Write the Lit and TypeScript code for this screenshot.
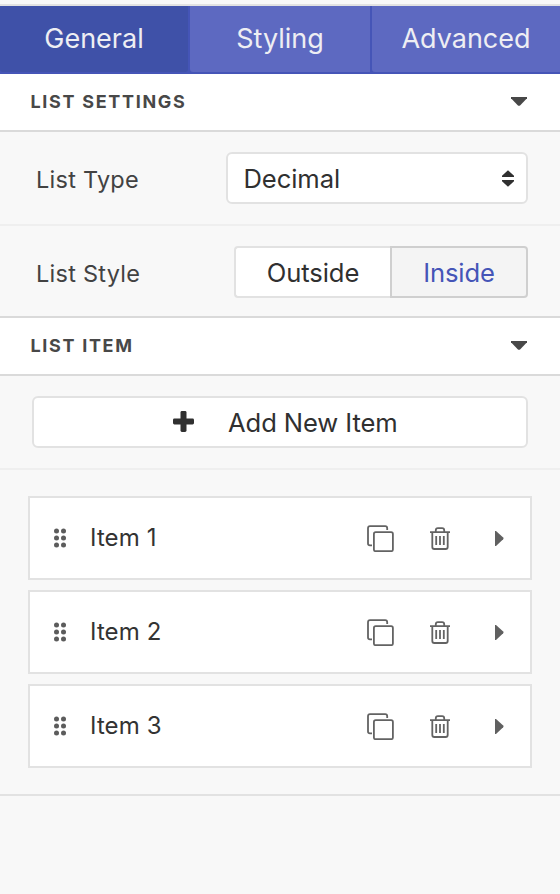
import { LitElement, html, css, svg } from "lit";
import { customElement, property, state } from "lit/decorators.js";
import { classMap } from "lit/directives/class-map.js";

@customElement("section-header")
class SectionHeader extends LitElement {
  @property() label = "";

  static styles = css`
    :host {
      box-sizing: border-box;
      display: flex;
      align-items: center;
      justify-content: space-between;
      height: 58px;
      padding: 0 33px 0 30.5px;
      background: #fff;
      border-bottom: 2px solid #dadada;
      color: #484848;
    }
    .label {
      font-size: 18px;
      font-weight: 650;
      letter-spacing: 1.68px;
      line-height: 24px;
    }
    svg {
      display: block;
    }
  `;

  render() {
    return html`<span class="label">${this.label}</span>
      <svg width="16" height="10" viewBox="0 0 16 10">
        <path d="M0 0H16V1.2L9.3 8.3Q8 9.4 6.7 8.3L0 1.2Z" fill="#484848" />
      </svg>`;
  }
}

@customElement("list-item-card")
class ListItemCard extends LitElement {
  @property() label = "";

  static styles = css`
    :host {
      box-sizing: border-box;
      display: flex;
      align-items: center;
      height: 84px;
      padding: 0 26px 0 24px;
      background: #fff;
      border: 2px solid #e2e2e2;
    }
    svg {
      display: block;
      flex: none;
    }
    .label {
      flex: 1;
      margin-left: 24px;
      font-size: 24px;
      line-height: 30px;
      letter-spacing: 0.1px;
      color: #333;
    }
    .copy {
      margin-right: 36px;
    }
    .trash {
      margin-right: 45px;
    }
  `;

  render() {
    const dots = [0, 1, 2].flatMap((row) =>
      [0, 1].map((col) => svg`<circle cx=${2.5 + col * 7} cy=${2.9 + row * 7.1} r="2.5" fill="#5c5c5c"/>`)
    );
    return html`
      <svg width="12" height="20" viewBox="0 0 12 20">${dots}</svg>
      <span class="label">${this.label}</span>
      <svg class="copy" width="27" height="28" viewBox="0 0 27 28" fill="none" stroke="#636363" stroke-width="1.8">
        <path d="M5 21.4H3Q1 21.4 1 19.4V4.2Q1 2.2 3 2.2H18.2Q20.2 2.2 20.2 4.2V6" />
        <rect x="6.9" y="8.2" width="19" height="19" rx="1.8" />
      </svg>
      <svg class="trash" width="20" height="24" viewBox="0 0 20 24" fill="none" stroke="#636363" stroke-width="1.8">
        <path d="M0 6.2H20M5.8 6V4.2Q5.8 2.1 7.9 2.1H12.1Q14.2 2.1 14.2 4.2V6M2.3 6.2V21Q2.3 23 4.3 23H15.7Q17.7 23 17.7 21V6.2M6.2 10V19M10 10V19M13.8 10V19" />
      </svg>
      <svg width="9" height="16" viewBox="0 0 9 16">
        <path d="M0 1H1L8.2 7.5Q9 8.4 8.2 9.3L1 16H0Z" fill="#606060" />
      </svg>
    `;
  }
}

@customElement("app-root")
class AppRoot extends LitElement {
  @state() tab = "General";
  @state() listStyle = "Inside";
  @state() items = ["Item 1", "Item 2", "Item 3"];

  static styles = css`
    :host {
      box-sizing: border-box;
      display: block;
      height: 894px;
      padding-top: 4px;
      overflow: hidden;
      background: #f8f8f8;
      font-family: Inter, "Liberation Sans", sans-serif;
    }
    .tabs {
      display: grid;
      grid-template-columns: 190px 182px 188px;
      height: 66px;
      border-top: 2px solid #e2e2e2;
      border-bottom: 2px solid #4555b7;
      background: #4555b7;
    }
    .tab {
      box-sizing: border-box;
      display: flex;
      justify-content: center;
      margin-right: 2px;
      padding-top: 16px;
      border-radius: 0 0 0 3px;
      background: #5d69c1;
      color: #eeeef3;
      font-size: 27px;
      line-height: 34px;
      font-weight: 380;
      letter-spacing: 0;
      cursor: pointer;
    }
    .tab:last-child {
      margin-right: 0;
    }
    .tab.active {
      border-radius: 0 0 3px 3px;
      background: #3f51a8;
    }
    .row {
      box-sizing: border-box;
      display: flex;
      align-items: center;
      justify-content: space-between;
      padding: 0 32px 0 36px;
    }
    .type {
      height: 94px;
      border-bottom: 2px solid #efefef;
    }
    .style {
      height: 92px;
      padding-top: 2px;
      border-bottom: 2px solid #dadada;
    }
    .name {
      padding-top: 3px;
      color: #424242;
      font-size: 23.5px;
      line-height: 30px;
      letter-spacing: 0.25px;
    }
    .control {
      box-sizing: border-box;
      height: 52px;
      border: 2px solid #e2e2e2;
      border-radius: 6px;
      background: #fff;
      color: #303030;
      font-size: 25.6px;
      letter-spacing: -0.1px;
      line-height: 32px;
    }
    .select {
      display: flex;
      align-items: center;
      justify-content: space-between;
      width: 302px;
      padding: 2px 12px 0 15.5px;
    }
    .select svg {
      display: block;
      margin-top: -2px;
    }
    .segments {
      display: flex;
    }
    .segment {
      display: flex;
      align-items: center;
      justify-content: center;
      padding-top: 2px;
      cursor: pointer;
    }
    .segment:first-child {
      width: 156px;
      border-right: 0;
      border-radius: 4px 0 0 4px;
    }
    .segment:last-child {
      width: 138px;
      border-radius: 0 4px 4px 0;
    }
    .segment.active {
      border-color: #cfcfcf;
      background: #f4f4f4;
      color: #4555b7;
    }
    .add-row {
      box-sizing: border-box;
      height: 94px;
      padding: 20px 32px;
      border-bottom: 2px solid #efefef;
    }
    .add {
      display: flex;
      align-items: center;
      width: 496px;
      gap: 34.5px;
      padding-left: 138.5px;
    }
    .add svg {
      margin-top: -1px;
    }
    .add span {
      padding-top: 2px;
    }
    .items {
      display: flex;
      flex-direction: column;
      gap: 10px;
      padding: 26px 28px;
      border-bottom: 2px solid #e2e2e2;
    }
  `;

  render() {
    return html`
      <div class="tabs">
        ${["General", "Styling", "Advanced"].map(
          (name) => html`<div class=${classMap({ tab: true, active: this.tab === name })} @click=${() => (this.tab = name)}>${name}</div>`
        )}
      </div>
      <section-header label="LIST SETTINGS"></section-header>
      <div class="row type">
        <span class="name">List Type</span>
        <div class="control select">
          <span>Decimal</span>
          <svg width="12" height="17" viewBox="0 0 12 17" fill="#303030">
            <path d="M6 .3L12 5.8V7H0V5.8ZM6 16.7L12 11.2V10H0V11.2Z" />
          </svg>
        </div>
      </div>
      <div class="row style">
        <span class="name">List Style</span>
        <div class="segments">
          ${["Outside", "Inside"].map(
            (name) => html`<div
              class=${classMap({ control: true, segment: true, active: this.listStyle === name })}
              @click=${() => (this.listStyle = name)}
            >${name}</div>`
          )}
        </div>
      </div>
      <section-header label="LIST ITEM"></section-header>
      <div class="add-row">
        <div class="control add">
          <svg width="21" height="21" viewBox="0 0 21 21" fill="#303030">
            <rect x="7.5" width="6" height="21" rx="1.4" />
            <rect y="7.5" width="21" height="6" rx="1.4" />
          </svg>
          <span>Add New Item</span>
        </div>
      </div>
      <div class="items">
        ${this.items.map((item) => html`<list-item-card label=${item}></list-item-card>`)}
      </div>
    `;
  }
}
